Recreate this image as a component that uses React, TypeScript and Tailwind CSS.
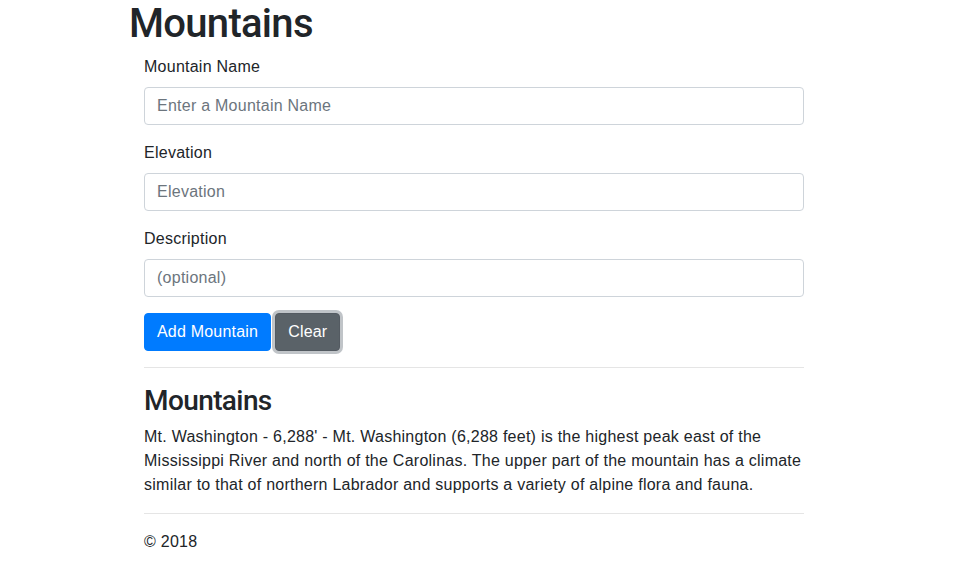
import React from 'react';

// Mountains form page (Bootstrap-like look)

function Field({ label, placeholder }: { label: string; placeholder: string }) {
  return (
    <div className="mb-4">
      <label className="block mb-2 text-base leading-6 text-[#212529]">{label}</label>
      <input
        type="text"
        placeholder={placeholder}
        className="block w-full h-[38px] px-3 py-1.5 text-base leading-6 tracking-[0.25px] text-[#495057] bg-white border border-[#ced4da] rounded placeholder:text-[#6c757d] outline-none"
      />
    </div>
  );
}

export default function App() {
  return (
    <div className="min-h-[587px] bg-white text-[#212529] tracking-[0.25px] font-['Liberation_Sans',Arial,sans-serif]">
      <div className="pl-[129px]">
        <h1 className="text-[40px] leading-[47px] font-medium tracking-[-0.7px] mb-2 font-['Roboto',Arial,sans-serif]">Mountains</h1>
      </div>
      <div className="ml-[144px] w-[660px]">
        <form onSubmit={(e) => e.preventDefault()}>
          <Field label="Mountain Name" placeholder="Enter a Mountain Name" />
          <Field label="Elevation" placeholder="Elevation" />
          <Field label="Description" placeholder="(optional)" />
          <div className="flex gap-1">
            <button
              type="submit"
              className="h-[38px] px-3 text-base leading-6 tracking-[0.2px] text-white bg-[#007bff] border border-[#007bff] rounded"
            >
              Add Mountain
            </button>
            <button
              type="button"
              className="h-[38px] px-3 text-base leading-6 tracking-[0.2px] text-white bg-[#5a6268] border border-[#545b62] rounded shadow-[0_0_0_3px_rgba(130,138,145,0.5)]"
            >
              Clear
            </button>
          </div>
        </form>
        <hr className="my-4 border-t border-[rgba(0,0,0,0.1)]" />
        <h3 className="text-[28px] leading-[33px] font-medium tracking-[-0.6px] mb-2 font-['Roboto',Arial,sans-serif]">Mountains</h3>
        <p className="text-base leading-6 mb-4">
          Mt. Washington - 6,288' - Mt. Washington (6,288 feet) is the highest peak east of the Mississippi River and north of the Carolinas. The upper part of the mountain has a climate similar to that of northern Labrador and supports a variety of alpine flora and fauna.
        </p>
        <hr className="my-4 border-t border-[rgba(0,0,0,0.1)]" />
        <footer className="text-base leading-6">© 2018</footer>
      </div>
    </div>
  );
}
